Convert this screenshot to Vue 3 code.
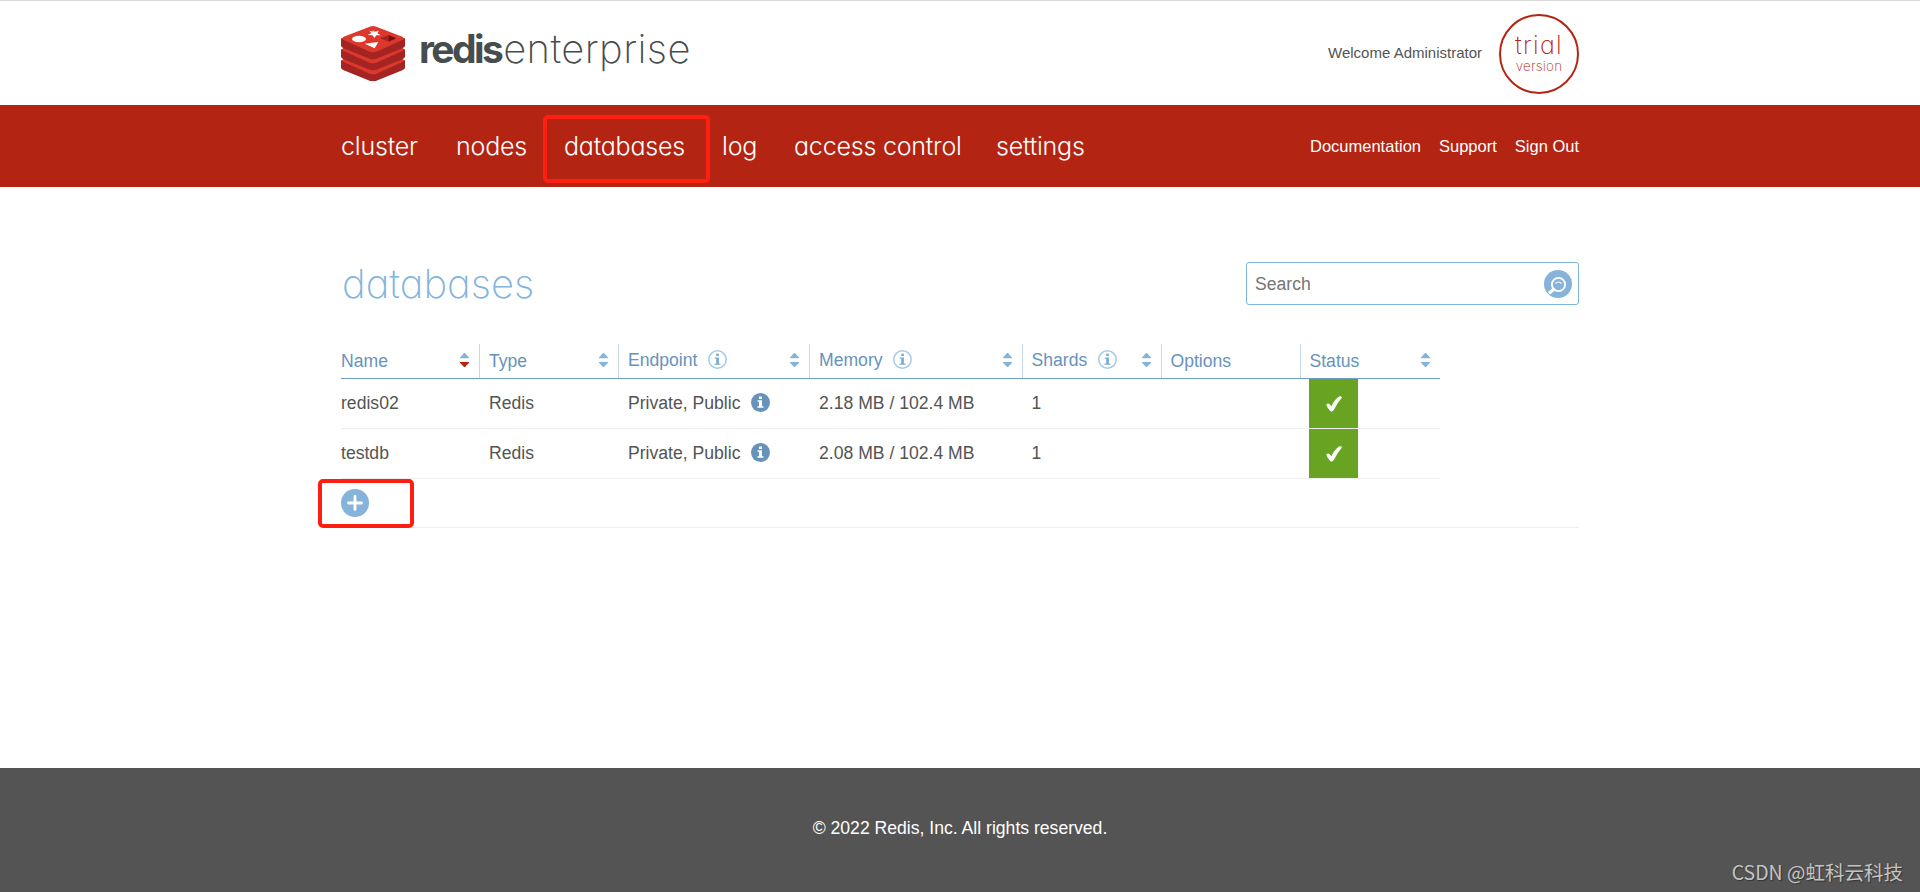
<script setup>
import { computed, ref } from 'vue';

const navItems = [
    { name: 'cluster', width: 115 },
    { name: 'nodes', width: 108 },
    { name: 'databases', width: 158 },
    { name: 'log', width: 72 },
    { name: 'access control', width: 202 },
    { name: 'settings', width: 95 },
];

const links = ['Documentation', 'Support', 'Sign Out'];

const columns = [
    { name: 'Name', sort: true, active: true },
    { name: 'Type', sort: true },
    { name: 'Endpoint', sort: true, info: true },
    { name: 'Memory', sort: true, info: true },
    { name: 'Shards', sort: true, info: true },
    { name: 'Options' },
    { name: 'Status', sort: true },
];

let search = ref('');

let databases = ref([
    { name: 'redis02', type: 'Redis', endpoint: 'Private, Public', memory: '2.18 MB / 102.4 MB', shards: 1 },
    { name: 'testdb', type: 'Redis', endpoint: 'Private, Public', memory: '2.08 MB / 102.4 MB', shards: 1 },
]);

let filtered = computed(() => databases.value.filter(db => db.name.includes(search.value)));
</script>

<template>
    <div class="page">
        <header class="header">
            <div class="wrap header-inner">
                <div class="logo">
                    <svg class="logo-cube" viewBox="0 0 192 165">
                        <g v-for="y in [66, 33, 0]" :key="y" :transform="`translate(0 ${y})`">
                            <path fill="#a32422" d="M0 37V59Q0 63 8 67L86 98Q96 102 106 98L184 67Q192 63 192 59V37Z" />
                            <path fill="#dc382c" d="M8 32L86 2Q96 -2 106 2L184 32Q192 36 184 42L106 77Q96 81 86 77L8 42Q0 36 8 32Z" />
                        </g>
                        <ellipse cx="54" cy="39" rx="21" ry="9.5" fill="#fff" />
                        <path fill="#fff" d="M94 11l7 6 13-3-5 8 10 6-13 0-6 8-5-8-15-1 11-5-6-8 12 3zM71 53l41-5-11 19z" />
                        <path fill="#a32422" d="M117 37l26-10v20z" />
                        <path fill="#7a0c0c" d="M143 27l23 10-23 10z" />
                    </svg>
                    <div class="logo-text">
                        <span class="logo-redis">redis</span><span class="logo-enterprise">enterprise</span>
                    </div>
                </div>
                <div class="account">
                    <span>Welcome Administrator</span>
                    <div class="trial">
                        <span class="trial-top">trial</span>
                        <span class="trial-bottom">version</span>
                    </div>
                </div>
            </div>
        </header>

        <nav class="nav">
            <div class="wrap nav-inner">
                <div class="menu">
                    <a v-for="item in navItems" :key="item.name" class="menu-item" :style="{ width: item.width + 'px' }">
                        <span>{{ item.name }}</span>
                        <i v-if="item.name === 'databases'" class="mark mark-nav"></i>
                    </a>
                </div>
                <div class="links">
                    <a v-for="link in links" :key="link">{{ link }}</a>
                </div>
            </div>
        </nav>

        <main class="wrap main">
            <div class="title-row">
                <h1>databases</h1>
                <label class="search">
                    <input v-model="search" placeholder="Search" />
                    <svg width="28" height="28" viewBox="0 0 28 28">
                        <circle cx="14" cy="14" r="14" fill="#86b3da" />
                        <circle cx="14.5" cy="14.5" r="6.6" fill="none" stroke="#fff" stroke-width="1.9" />
                        <path d="M9.5 19.5L6 22.5" stroke="#fff" stroke-width="3.4" stroke-linecap="round" />
                        <path d="M11.5 13.5Q14.5 10.5 17.5 13.5" fill="none" stroke="#fff" stroke-width="1.1" />
                    </svg>
                </label>
            </div>

            <div class="grid head">
                <div v-for="col in columns" :key="col.name" class="th" :class="{ raised: col.info }">
                    <span>{{ col.name }}</span>
                    <svg v-if="col.info" class="info" viewBox="0 0 19 19">
                        <circle cx="9.5" cy="9.5" r="8.7" fill="none" stroke="#a9cbe6" stroke-width="1.6" />
                        <path fill="#78acd6" d="M8.2 3.8h2.7v2.1H8.2zM6.8 7.4h4.1v6h1.5v1.3H6.5v-1.3h1.7V8.7H6.8z" />
                    </svg>
                    <svg v-if="col.sort" class="sort" viewBox="0 0 9 14">
                        <path fill="#86b3da" d="M0 5.3V4.5L4 0h1l4 4.5v.8z" />
                        <path :fill="col.active ? '#b42412' : '#86b3da'" d="M0 9v.8L4 14h1l4-4.2V9z" />
                    </svg>
                </div>
            </div>
            <div v-for="db in filtered" :key="db.name" class="grid row">
                <div>{{ db.name }}</div>
                <div>{{ db.type }}</div>
                <div>
                    <span>{{ db.endpoint }}</span>
                    <svg class="info" viewBox="0 0 19 19">
                        <circle cx="9.5" cy="9.5" r="9.5" fill="#6793bb" />
                        <path fill="#fff" d="M8 3.6h3v2.3H8zM6.6 7.3h4.4v6h1.5v1.5H6.4v-1.5H8V8.800H6.600z" />
                    </svg>
                </div>
                <div>{{ db.memory }}</div>
                <div>{{ db.shards }}</div>
                <div></div>
                <div class="status">
                    <span class="ok">
                        <svg width="18" height="18" viewBox="0 0 18 18">
                            <path fill="#fff" d="M1.2 9.800Q2.800 7.500 4.400 9L6.300 11.300Q9.500 4.500 14 1.500Q17.200 .5 16.800 2.800Q12.500 7.500 8.800 15Q7 17.500 5.300 16Q2.500 13.500 1.200 9.800z" />
                        </svg>
                    </span>
                </div>
            </div>
            <div class="add-row">
                <svg width="28" height="28" viewBox="0 0 28 28">
                    <circle cx="14" cy="14" r="14" fill="#86b3da" />
                    <path d="M14 7.500v13M7.500 14h13" stroke="#fff" stroke-width="2.800" stroke-linecap="round" />
                </svg>
                <i class="mark mark-add"></i>
            </div>
        </main>

        <footer class="footer">
            <span>© 2022 Redis, Inc. All rights reserved.</span>
            <span class="watermark">CSDN @虹科云科技</span>
        </footer>
    </div>
</template>

<style>
body {
    background: #fff;
}
</style>

<style scoped>
.page {
    height: 892px;
    display: flex;
    flex-direction: column;
    overflow: hidden;
    font-family: "Liberation Sans", Arial, sans-serif;
    font-size: 17.6px;
    color: #545454;
}

.page * {
    box-sizing: border-box;
}

.wrap {
    width: 1238px;
    margin-left: 341px;
}

.header {
    height: 105px;
    border-top: 1px solid #d9d9d9;
}

.header-inner,
.nav-inner {
    height: 100%;
    display: flex;
    justify-content: space-between;
    align-items: center;
}

.logo {
    display: flex;
    align-items: center;
    font-family: Inter, sans-serif;
    font-feature-settings: "cv11";
    font-size: 40px;
    color: #474c4d;
}

.logo-cube {
    width: 64px;
    height: 55px;
    margin-right: 14px;
}

.logo-text {
    margin-top: -9px;
}

.logo-redis {
    font-size: 39px;
    font-weight: 700;
    letter-spacing: -2.6px;
}

.logo-enterprise {
    margin-left: 2px;
    font-weight: 250;
    letter-spacing: 0.4px;
}

.account {
    display: flex;
    align-items: center;
    gap: 17px;
    padding-top: 2px;
    font-size: 15px;
}

.account > span {
    margin-top: -4px;
}

.trial {
    width: 80px;
    height: 80px;
    border: 2px solid #b42412;
    border-radius: 50%;
    display: flex;
    flex-direction: column;
    align-items: center;
    justify-content: center;
    font-family: Inter, sans-serif;
    font-feature-settings: "cv11";
    font-weight: 250;
    color: #b42412;
}

.trial-top {
    font-size: 25px;
    line-height: 24px;
    letter-spacing: 1.3px;
}

.trial-bottom {
    font-size: 13.5px;
    line-height: 18px;
    font-weight: 200;
    letter-spacing: 0.2px;
}

.nav {
    height: 82px;
    background: #b42412;
    color: #fff;
}

.menu {
    display: flex;
    font-family: Inter, sans-serif;
    font-feature-settings: "cv11";
    font-weight: 300;
    font-size: 25px;
    letter-spacing: -0.2px;
    white-space: nowrap;
}

.menu-item {
    position: relative;
}

.mark {
    position: absolute;
    border: 4px solid #ff1e12;
    border-radius: 5px;
}

.mark-nav {
    left: -21px;
    top: -16px;
    width: 167px;
    height: 68px;
}

.links {
    display: flex;
    gap: 18px;
    font-size: 16.5px;
}

.main {
    flex: 1;
    padding-top: 75px;
}

.title-row {
    height: 82px;
    display: flex;
    justify-content: space-between;
    align-items: flex-start;
}

h1 {
    margin: 0 0 0 1px;
    font-family: Inter, sans-serif;
    font-feature-settings: "cv11";
    font-weight: 250;
    font-size: 40px;
    line-height: 43px;
    letter-spacing: 0;
    color: #83b4dc;
}

.search {
    width: 333px;
    height: 43px;
    border: 1px solid #7fb4dc;
    border-radius: 3px;
    padding: 0 6px 0 8px;
    display: flex;
    align-items: center;
}

.search input {
    flex: 1;
    border: 0;
    outline: 0;
    padding: 1px 0 0;
    font: inherit;
    color: #545454;
}

.search input::placeholder {
    color: #757575;
}

.grid {
    width: 1099px;
    display: grid;
    grid-template-columns: 139px 139px 191px 213px 139px 139px 139px;
}

.head {
    height: 35px;
    border-bottom: 1px solid #6f9dc2;
    color: #6793bb;
}

.th {
    display: flex;
    align-items: center;
    border-right: 1px solid #c5d7e6;
    padding-right: 10px;
}

.th:last-child {
    border-right: 0;
}

.th:not(:first-child),
.row > div:not(:first-child) {
    padding-left: 9px;
}

.th:nth-child(n + 5),
.row > div:nth-child(n + 5) {
    padding-left: 8.5px;
}

.th.raised span {
    margin-top: -2px;
}

.info {
    width: 19px;
    height: 19px;
    margin-left: 10.5px;
}

.th .info {
    margin-top: -3px;
}

.row .info {
    margin-top: -2px;
}

.sort {
    width: 9px;
    height: 14px;
    margin-left: auto;
    margin-top: -2px;
}

.row {
    height: 50px;
    border-bottom: 1px solid #eee;
}

.row > div {
    display: flex;
    align-items: center;
}

.row > .status:last-child {
    padding-left: 8px;
}

.ok {
    width: 49px;
    height: 49px;
    background: #68a322;
    display: flex;
    align-items: center;
    justify-content: center;
}

.add-row {
    position: relative;
    height: 49px;
    display: flex;
    align-items: center;
    border-bottom: 1px solid #eee;
}

.mark-add {
    left: -23px;
    top: 0;
    width: 96px;
    height: 49px;
}

.footer {
    position: relative;
    height: 124px;
    background: #545454;
    color: #fff;
    display: flex;
    justify-content: center;
    padding-top: 50px;
}

.watermark {
    position: absolute;
    right: 17px;
    bottom: 6px;
    font-family: "Noto Sans CJK SC", sans-serif;
    font-size: 19.5px;
    line-height: 28px;
    color: #c4c4c4;
    text-shadow: 1px 1px 1px #333;
}
</style>
